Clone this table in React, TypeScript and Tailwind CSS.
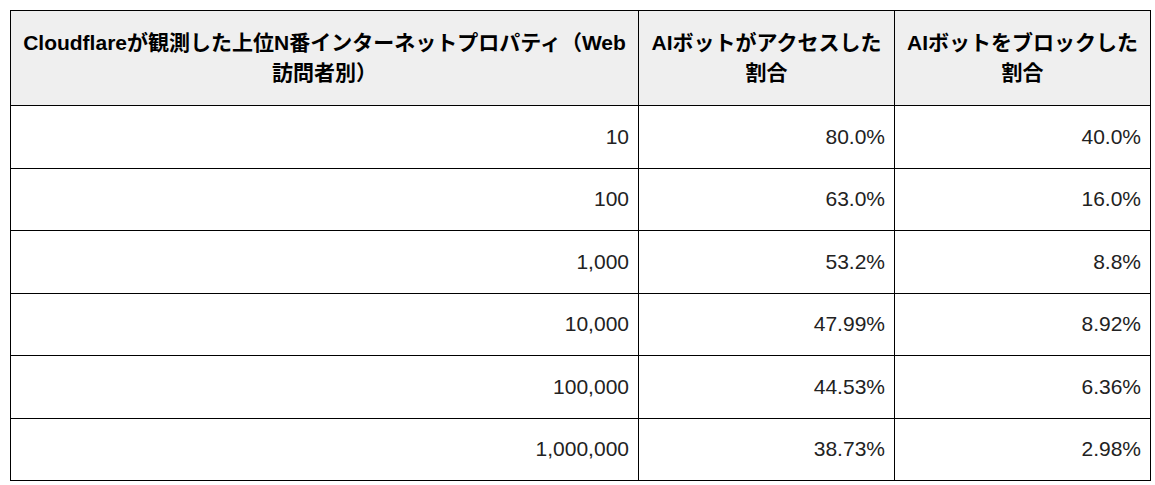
const rows: Array<[string, string, string]> = [
  ["10", "80.0%", "40.0%"],
  ["100", "63.0%", "16.0%"],
  ["1,000", "53.2%", "8.8%"],
  ["10,000", "47.99%", "8.92%"],
  ["100,000", "44.53%", "6.36%"],
  ["1,000,000", "38.73%", "2.98%"],
];

const headers = [
  "Cloudflareが観測した上位N番インターネットプロパティ（Web訪問者別）",
  "AIボットがアクセスした割合",
  "AIボットをブロックした割合",
];

export default function App() {
  return (
    <div className="bg-white min-h-[485px] pl-[10px] pt-[10px] font-['Liberation_Sans','Noto_Sans_CJK_JP',sans-serif] text-[21px] leading-[30px] text-[#222]">
      <table className="table-fixed border-collapse w-[1140px]">
        <colgroup>
          <col className="w-[628px]" />
          <col className="w-[256px]" />
          <col className="w-[256px]" />
        </colgroup>
        <thead>
          <tr className="h-[95px] bg-[#efefef]">
            {headers.map((h) => (
              <th key={h} className="border border-black px-2 font-bold text-center align-middle text-black">
                {h}
              </th>
            ))}
          </tr>
        </thead>
        <tbody>
          {rows.map((r, idx) => (
            <tr key={idx} className="h-[62.5px]">
              {r.map((cell, i) => (
                <td key={i} className="border border-black pl-2 pr-[9px] text-right align-middle">
                  {cell}
                </td>
              ))}
            </tr>
          ))}
        </tbody>
      </table>
    </div>
  );
}
